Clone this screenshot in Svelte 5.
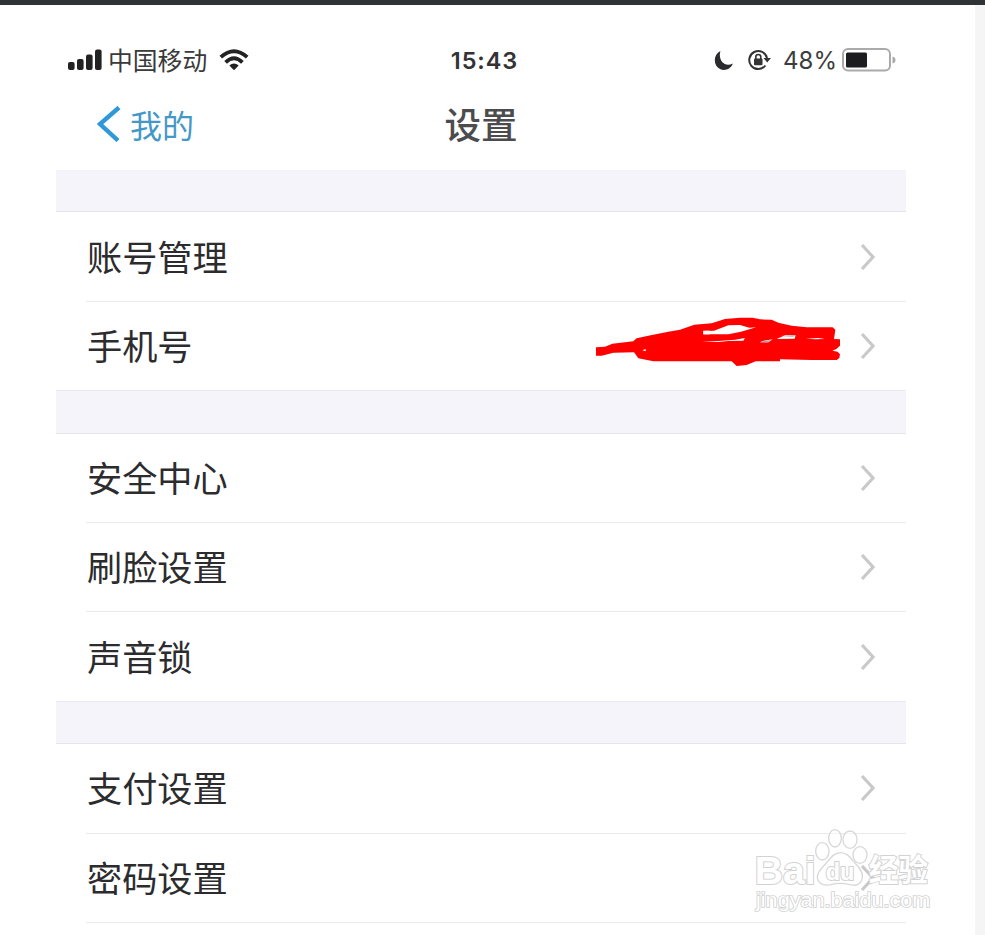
<script>
  const groups = [
    [{ label: '账号管理' }, { label: '手机号', redacted: true }],
    [{ label: '安全中心' }, { label: '刷脸设置' }, { label: '声音锁' }],
    [{ label: '支付设置' }, { label: '密码设置' }]
  ];
</script>

<div class="page">
  <main class="phone">
    <div class="status">
      <div class="left">
        <svg class="signal" width="34" height="22" viewBox="0 0 34 22" fill="#222">
          <rect x="0" y="13" width="6.6" height="8" rx="2" />
          <rect x="9" y="10" width="6.6" height="11" rx="2" />
          <rect x="18" y="5.5" width="6.6" height="15.5" rx="2" />
          <rect x="27" y="0.5" width="6.6" height="20.5" rx="2" />
        </svg>
        <span class="carrier">中国移动</span>
        <svg class="wifi" width="30" height="22" viewBox="0 0 30 22" fill="none" stroke="#222" stroke-width="3.8">
          <path d="M1.8 8.2Q15 -3.8 28.2 8.2" />
          <path d="M6.6 13.4Q15 5.2 23.4 13.4" />
          <path d="M10.3 16.4Q15 12.6 19.7 16.4L15 21.2Z" fill="#222" stroke="none" />
        </svg>
      </div>
      <span class="time">15:43</span>
      <div class="right">
        <svg width="20" height="21" viewBox="0 0 20 21"><path d="M6.4 1C-1.5 5.2-.5 16 6 19C11 21.5 17.2 18.5 18.8 13.4C10.5 17.8 3.8 10 6.4 1Z" fill="#2b2b2f" /></svg>
        <svg class="lock" width="25" height="22" viewBox="0 0 25 22" fill="none" stroke="#333" stroke-width="2">
          <path d="M18.4 16.5A9 9 0 1 1 20 9" />
          <path d="M16.5 9H24L20.2 13.4Z" fill="#333" stroke="none" />
          <rect x="7" y="9.5" width="8.5" height="6.8" rx="1" fill="#333" stroke="none" />
          <path d="M8.8 10V8a2.5 2.5 0 0 1 5 0v2" stroke-width="1.6" />
        </svg>
        <span class="percent">48%</span>
        <svg class="battery" width="54" height="24" viewBox="0 0 54 24">
          <rect x="1" y="1" width="47" height="21.5" rx="5" fill="#fff" stroke="#aaa" stroke-width="2" />
          <rect x="4" y="4.5" width="21" height="15" rx="1.5" fill="#1d1d1f" />
          <path d="M50.5 8.5Q53.5 9 53.5 12T50.5 15.5Z" fill="#aaa" />
        </svg>
      </div>
    </div>

    <header class="nav">
      <div class="back">
        <svg width="24" height="36" viewBox="0 0 24 36"><path d="M22 1.5L3 18L21 34.5" fill="none" stroke="#2f98d8" stroke-width="4.4" /></svg>
        <span>我的</span>
      </div>
      <h1>设置</h1>
    </header>

    {#each groups as group}
      <section>
        <div class="band"></div>
        {#each group as item}
          <div class="row">
            <span class="label">{item.label}</span>
            {#if item.redacted}
              <svg class="scribble" width="245" height="49" viewBox="33 35 735 147" fill="#f00">
                <path d="M33 126L60 124L82 115L145 108L155 99L190 91L250 79L285 73L328 58L380 54L420 41L465 37L503 37L525 42L560 43L580 52L620 61L665 66L743 66L751 73L747 101L765 102V121L754 131L742 136L758 139L765 147L763 158L755 164H680L585 162V168H512L485 179L455 182L440 168H205L160 159L147 141L85 142L50 151H33Z" />
                <path d="M355 77L387 76L430 60L465 59L493 67L513 66L468 79L430 87H355ZM350 109L400 107L450 103L480 98L475 106L430 107L400 110ZM533 107L563 102L550 111H525ZM570 94L600 90H632L629 100L575 101ZM663 100L700 98L720 101L690 102Z" fill="#fff" />
                <path d="M355 76H374V87H355Z" fill="#fff" />
                <path d="M172 135L182 131V138Z" fill="#fff" />
                <path d="M590 93L632 90L624 94ZM532 107L560 104L551 111H528Z" fill="#aaa" />
                <path d="M571 90H600L575 101H562Z" fill="#f00" />
              </svg>
            {/if}
            <svg class="arrow" width="15" height="28" viewBox="0 0 15 28"><path d="M2 2L13 14L2 26" fill="none" stroke="#c9c9cb" stroke-width="3.2" /></svg>
          </div>
        {/each}
      </section>
    {/each}
  </main>
  <aside></aside>

  <svg class="watermark" width="195" height="90" viewBox="0 0 585 270">
    <g fill="#fff" fill-opacity=".5" stroke="#d8d8d8" stroke-width="4">
      <ellipse cx="202" cy="73" rx="20" ry="26" />
      <ellipse cx="240" cy="34" rx="19" ry="26" />
      <ellipse cx="285" cy="38" rx="21" ry="26" />
      <ellipse cx="315" cy="84" rx="21" ry="25" />
      <path d="M257 77C278 77 288 95 300 108C314 122 324 134 322 152C319 173 302 177 284 173C265 168 247 168 228 173C208 177 190 171 187 152C186 134 202 122 213 109C225 95 236 77 257 77Z" />
    </g>
    <g class="outline">
      <text class="brand" x="-1" y="172" textLength="183" lengthAdjust="spacingAndGlyphs">Bai</text>
      <text class="du" x="212" y="160" textLength="86" lengthAdjust="spacingAndGlyphs">du</text>
      <text class="cjk" x="341" y="163" textLength="178" lengthAdjust="spacingAndGlyphs">经验</text>
      <text class="url" x="3" y="241" textLength="523" lengthAdjust="spacingAndGlyphs">jingyan.baidu.com</text>
    </g>
  </svg>
</div>

<style>
  :global(body) { background: #fff; overflow: hidden; }
  .page {
    position: relative; box-sizing: border-box; width: 985px; height: 935px; overflow: hidden;
    display: flex; justify-content: space-between; border-top: 5px solid #303335; background: #fff;
    font-family: "Noto Sans CJK SC", sans-serif; color: #2c2c2e;
  }
  .phone { width: 850px; margin-left: 56px; }
  aside { width: 10px; background: #f5f5f5; }
  svg { display: block; flex: none; }
  .status { height: 80px; padding: 30px 10px 0 12px; box-sizing: border-box; display: grid; grid-template-columns: 1fr auto 1fr; align-items: center; }
  .left, .right { display: flex; align-items: center; }
  .right { justify-content: flex-end; }
  .carrier { margin-left: 6px; font-size: 24.8px; line-height: 48px; padding-bottom: 2px; color: #3a3a3a; }
  .wifi { margin-left: 12px; }
  .time { padding: 1px 0 0 5px; font: 600 23.5px/49px Inter, sans-serif; letter-spacing: .9px; color: #333; }
  .lock { margin-left: 13px; }
  .percent { margin-left: 11px; padding-top: 1px; font: 400 24px/49px Inter, sans-serif; color: #3d3d3d; }
  .battery { margin-left: 5px; }
  .nav { height: 85px; display: grid; grid-template-columns: 1fr auto 1fr; align-items: center; padding: 0 41px 8px; box-sizing: border-box; }
  .back { display: flex; align-items: center; gap: 9px; font-size: 32px; line-height: 48px; color: #4498c8; }
  h1 { margin: 0; font-size: 36.5px; line-height: 48px; font-weight: 500; color: #4c4c4e; }
  .band { height: 42.4px; box-sizing: border-box; background: #f4f4fa; border-bottom: 1px solid #e6e6ea; }
  .row {
    height: 89.4px; box-sizing: border-box; margin-left: 30px; padding-right: 31px;
    display: flex; align-items: center; border-bottom: 1px solid #e9e9eb;
  }
  .row:last-child { margin-left: 0; padding-left: 30px; }
  section:last-child .row:last-child { margin-left: 30px; padding-left: 0; }
  .label { font-size: 35.2px; line-height: 52px; padding: 0 0 2px 1px; margin-right: auto; }
  .scribble { margin: 0 19px 8px 0; }
  .watermark { position: absolute; left: 755px; top: 822px; overflow: visible; }
  .outline { fill: #fff; stroke: #d2d2d2; stroke-width: 6px; paint-order: stroke; }
  .brand { font: 700 116px "Liberation Sans", sans-serif; }
  .du { font: 700 70px "Liberation Sans", sans-serif; }
  .cjk { font: 700 92px "Liberation Sans", "Noto Sans CJK SC", sans-serif; }
  .url { font: 400 60px "Liberation Sans", sans-serif; stroke-width: 5px; }
</style>
